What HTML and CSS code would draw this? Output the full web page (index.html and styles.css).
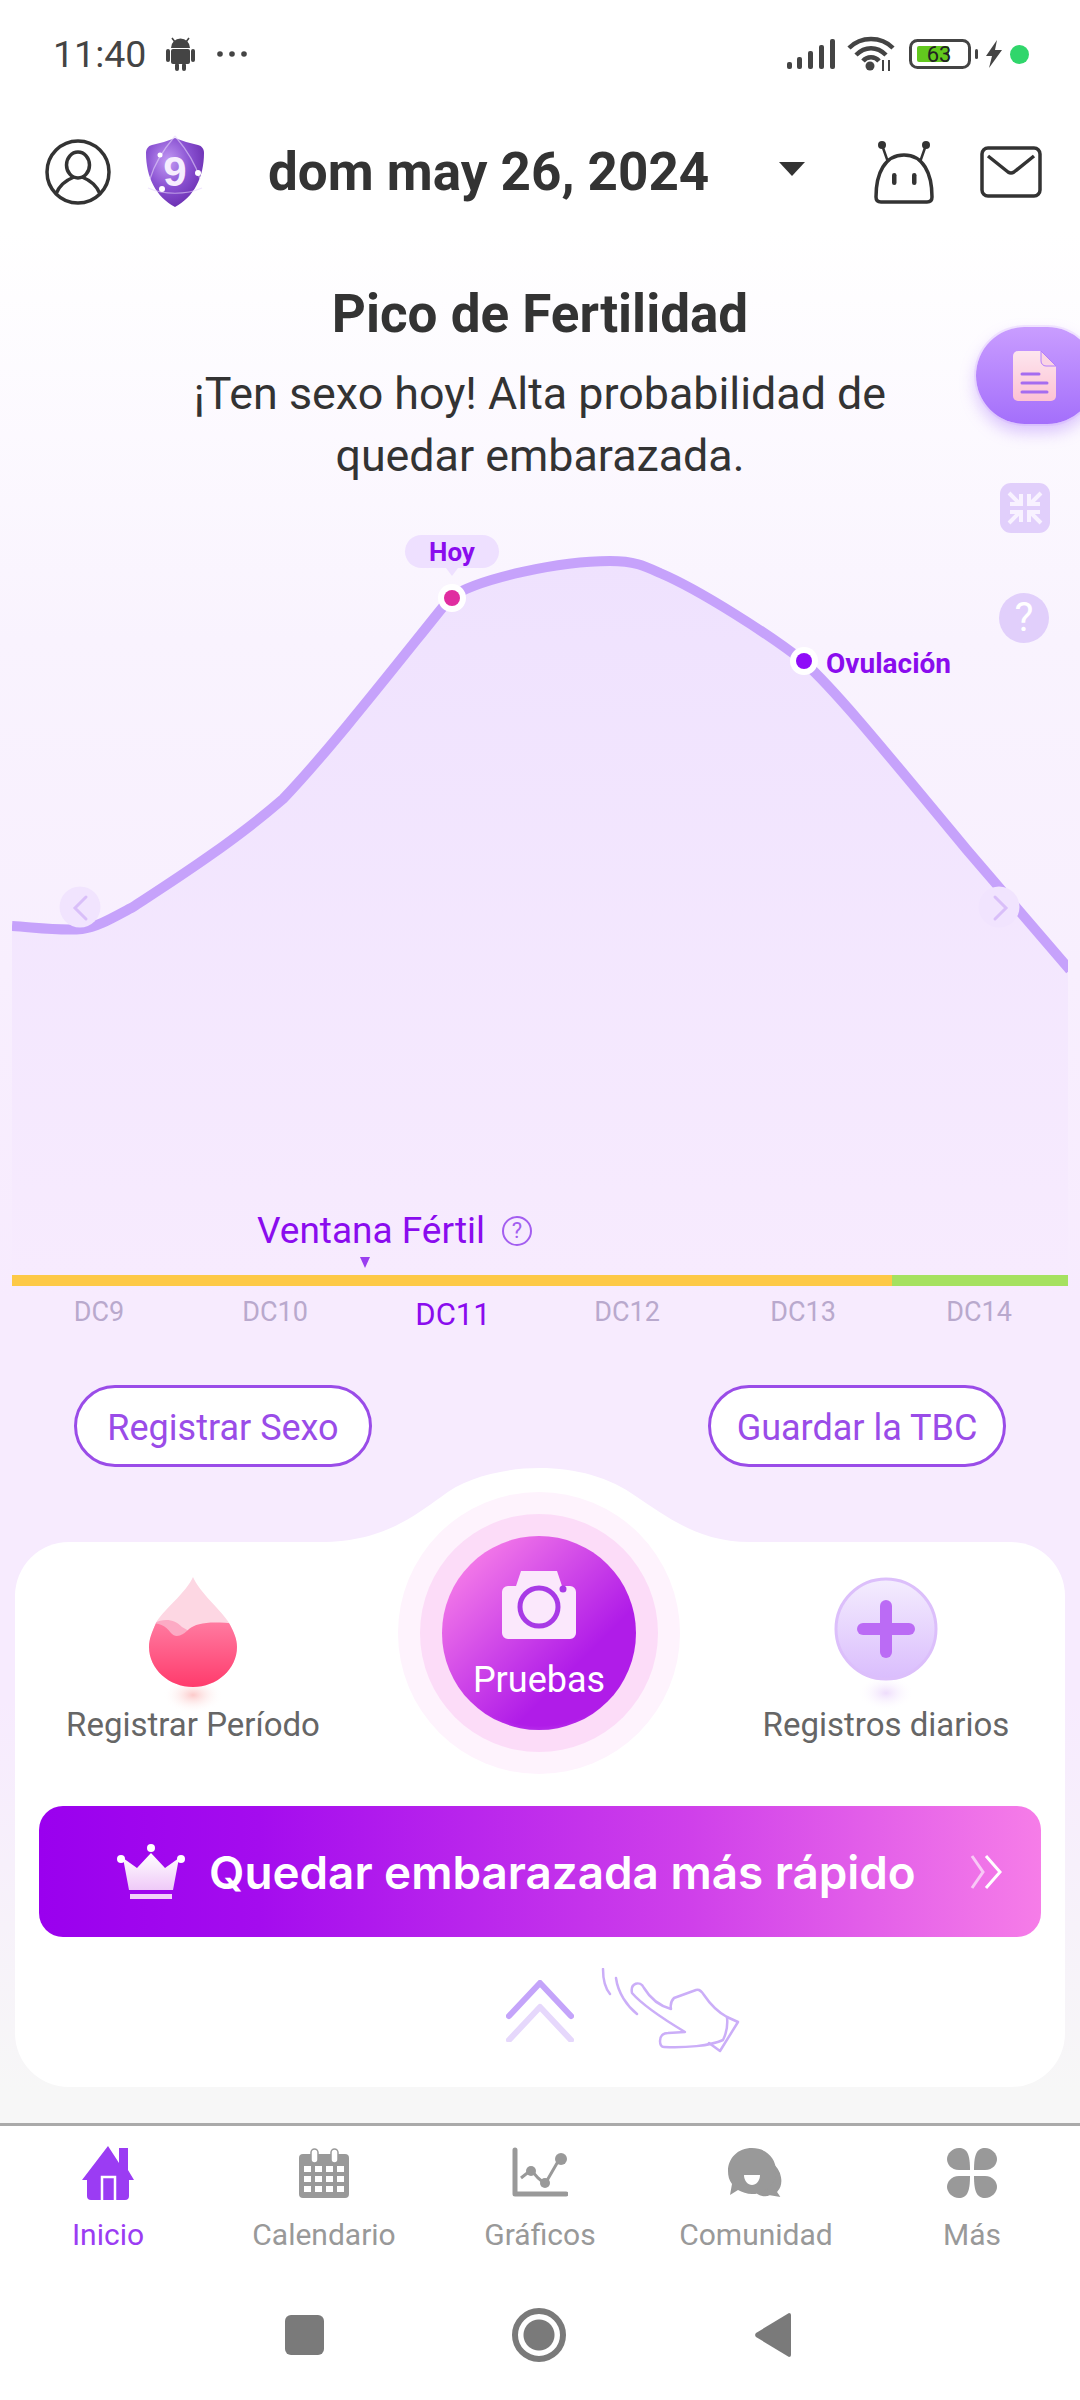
FILE: index.html
```html
<!DOCTYPE html>
<html lang="es">
<head>
    <meta charset="UTF-8">
    <meta name="viewport" content="width=device-width, initial-scale=1.0">
    <title>Pico de Fertilidad</title>
    <link rel="stylesheet" href="styles.css">
</head>
<body>
<div class="page">
    <!-- status bar -->
    <div class="status-bar">
        <span class="status-time">11:40</span>
        <svg class="st-android" width="29" height="34" viewBox="0 0 29 34"><path d="M6 1l3 4M23 1l-3 4" stroke="#444" stroke-width="1.6"/><path d="M5 11a9.500 9.500 0 0 1 19 0z" fill="#444"/><rect x="5" y="12" width="19" height="15" rx="2" fill="#444"/><rect x="0" y="12" width="4" height="13" rx="2" fill="#444"/><rect x="25" y="12" width="4" height="13" rx="2" fill="#444"/><rect x="9" y="26" width="4" height="8" rx="2" fill="#444"/><rect x="16" y="26" width="4" height="8" rx="2" fill="#444"/></svg>
        <svg class="st-dots" width="30" height="6" viewBox="0 0 30 6"><circle cx="3" cy="3" r="2.800" fill="#444"/><circle cx="15" cy="3" r="2.800" fill="#444"/><circle cx="27" cy="3" r="2.800" fill="#444"/></svg>
        <div class="status-right">
            <svg width="48" height="30" viewBox="0 0 48 30"><rect x="0" y="23" width="5" height="7" rx="2" fill="#444"/><rect x="10" y="18" width="5" height="12" rx="2" fill="#444"/><rect x="21" y="12" width="5" height="18" rx="2" fill="#444"/><rect x="32" y="6" width="5" height="24" rx="2" fill="#444"/><rect x="43" y="0" width="5" height="30" rx="2" fill="#444"/></svg>
            <svg class="st-wifi" width="48" height="36" viewBox="0 0 48 36"><g fill="none" stroke="#444" stroke-width="4.500"><path d="M2 12C14 0 34 0 46 12"/><path d="M9 19C18 10 30 10 39 19"/><path d="M16 25C20 20 28 20 32 25"/></g><circle cx="23" cy="30" r="4.500" fill="#444"/><path d="M36 24v11M42 24v11" stroke="#444" stroke-width="2"/></svg>
            <svg class="st-battery" width="70" height="30" viewBox="0 0 70 30"><rect x="1.500" y="1.500" width="59" height="27" rx="7" fill="none" stroke="#444" stroke-width="3"/><rect x="8" y="7" width="32" height="16" rx="2" fill="#62c91e"/><rect x="66" y="10" width="3" height="10" rx="1.500" fill="#444"/><text x="30" y="23" text-anchor="middle" class="battery-text">63</text></svg>
            <svg class="st-bolt" width="18" height="28" viewBox="0 0 18 28"><path d="M12 0L1 16h6L4 28 17 10h-7z" fill="#444"/></svg>
            <span class="st-green"></span>
        </div>
    </div>

    <!-- header -->
    <header class="app-header">
        <svg class="hd-profile" width="66" height="66" viewBox="0 0 66 66"><g fill="none" stroke="#333" stroke-width="3.500"><circle cx="33" cy="33" r="31"/><ellipse cx="33" cy="26" rx="11.500" ry="13"/><path d="M11 55C15 44 24 40 29 38M55 55C51 44 42 40 37 38"/></g></svg>
        <svg class="hd-badge" width="62" height="74" viewBox="0 0 62 74">
            <defs><radialGradient id="shield" cx=".38" cy=".34" r=".75"><stop offset="0" stop-color="#c39bf4"/><stop offset=".5" stop-color="#8a52d2"/><stop offset="1" stop-color="#6528ab"/></radialGradient></defs>
            <path d="M31 3C38 6 46 8 54 10C58 11 60 14 60 18C60 42 50 62 31 72C12 62 2 42 2 18C2 14 4 11 8 10C16 8 24 6 31 3z" fill="url(#shield)"/>
            <path d="M31 1C42 14 52 30 56 44M31 1C20 14 10 30 6 44M4 53C20 60 42 60 58 53" fill="none" stroke="#e4d4fa" stroke-width="1.200" opacity=".6"/>
            <circle cx="16" cy="20" r="2.500" fill="#fff"/><circle cx="54" cy="38" r="3" fill="#fff"/><circle cx="18" cy="54" r="3" fill="#fff"/>
            <text x="31" y="51" text-anchor="middle" class="badge-text">9</text>
        </svg>
        <h1 class="hd-date">dom may 26, 2024</h1>
        <span class="hd-caret"></span>
        <svg class="hd-robot" width="62" height="64" viewBox="0 0 62 64"><g fill="none" stroke="#333" stroke-width="3.500"><path d="M3 57C3 33 12 15 31 15S59 33 59 57Q59 62 54 62H8Q3 62 3 57z" stroke-linejoin="round"/><path d="M15 22L9 5M47 22L53 5" stroke-width="2.500"/></g><circle cx="9" cy="5" r="4" fill="#333"/><circle cx="53" cy="5" r="4" fill="#333"/><rect x="19" y="33" width="4.500" height="12" rx="2.250" fill="#333"/><rect x="39" y="33" width="4.500" height="12" rx="2.250" fill="#333"/></svg>
        <svg class="hd-mail" width="62" height="52" viewBox="0 0 62 52"><g fill="none" stroke="#333" stroke-width="3.500"><rect x="2" y="2" width="58" height="48" rx="6"/><path d="M8 10L28 26Q31 28 34 26L54 10" stroke-linejoin="round"/></g></svg>
    </header>

    <!-- headline -->
    <section class="hero">
        <h2 class="hero-title">Pico de Fertilidad</h2>
        <p class="hero-text">¡Ten sexo hoy! Alta probabilidad de<br>quedar embarazada.</p>
    </section>

    <div class="side-doc">
        <svg width="44" height="52" viewBox="0 0 44 52">
            <defs><linearGradient id="doc" x1="0" y1="0" x2="0" y2="1"><stop offset="0" stop-color="#fde6ee"/><stop offset="1" stop-color="#fdc2d4"/></linearGradient></defs>
            <path d="M5 1H28L43 16V46a5 5 0 0 1-5 5H5a5 5 0 0 1-5-5V6a5 5 0 0 1 5-5z" fill="url(#doc)"/>
            <path d="M28 1L43 16H33a5 5 0 0 1-5-5z" fill="#fbd4e3" stroke="#b27dfc" stroke-width="1"/>
            <path d="M9 24H26M9 33H34M9 42H34" stroke="#a56cf0" stroke-width="3" stroke-linecap="round"/>
        </svg>
    </div>
    <div class="side-shrink">
        <svg width="36" height="34" viewBox="0 0 36 34"><g fill="none" stroke="#f8f2ff" stroke-width="4"><path d="M2 2L12 12M14 3V13H3"/><path d="M34 2L24 12M22 3V13H33"/><path d="M2 32L12 22M14 31V21H3"/><path d="M34 32L24 22M22 31V21H33"/></g></svg>
    </div>
    <div class="side-help">?</div>

    <!-- chart -->
    <section class="chart">
        <svg class="chart-svg" width="1080" height="840" viewBox="0 500 1080 840">
            <defs>
                <linearGradient id="area" x1="0" y1="0" x2="0" y2="1">
                    <stop offset="0" stop-color="#efe2fe"/>
                    <stop offset="1" stop-color="#f7ebfe"/>
                </linearGradient>
                <clipPath id="chartClip"><rect x="12" y="500" width="1056" height="775"/></clipPath>
            </defs>
            <g clip-path="url(#chartClip)">
                <path d="M12 926C40 928 62 931 82 929C98 927 114 917 133 907C165 886 230 845 283 799C330 750 400 660 451 597C480 578 560 561 610 561C635 561 645 566 660 573C700 590 770 635 803 661C835 690 880 745 967 850L1070 970V1275H12z" fill="url(#area)"/>
                <path d="M12 926C40 928 62 931 82 929C98 927 114 917 133 907C165 886 230 845 283 799C330 750 400 660 451 597C480 578 560 561 610 561C635 561 645 566 660 573C700 590 770 635 803 661C835 690 880 745 967 850L1070 970" fill="none" stroke="#c6a2fb" stroke-width="10"/>
            </g>
            <circle cx="80" cy="907" r="20.500" fill="#f1e4fe"/>
            <path d="M86 897L75 908L86 919" fill="none" stroke="#d9bff9" stroke-width="3" stroke-linecap="round"/>
            <circle cx="999" cy="907" r="20.500" fill="#f1e4fe"/>
            <path d="M995 897L1006 908L995 919" fill="none" stroke="#d9bff9" stroke-width="3" stroke-linecap="round"/>
            <circle cx="452" cy="598" r="14" fill="#fff"/>
            <circle cx="452" cy="598" r="8" fill="#e02da0"/>
            <circle cx="804" cy="661" r="14" fill="#fff"/>
            <circle cx="804" cy="661" r="8" fill="#8f0cf8"/>
        </svg>
        <span class="chart-today">Hoy</span>
        <span class="chart-ovulation">Ovulación</span>
        <div class="window-label">
            <span>Ventana Fértil</span>
            <span class="window-help">?</span>
        </div>
        <span class="window-marker"></span>
        <div class="cycle-bar"><span class="bar-yellow"></span><span class="bar-green"></span></div>
        <div class="cycle-days">
            <span>DC9</span><span>DC10</span><span class="day-today">DC11</span><span>DC12</span><span>DC13</span><span>DC14</span>
        </div>
    </section>

    <div class="actions">
        <button class="pill-btn">Registrar Sexo</button>
        <button class="pill-btn">Guardar la TBC</button>
    </div>

    <!-- white card -->
    <section class="card">
        <svg class="card-hump" width="560" height="76" viewBox="0 0 560 76"><path d="M60 75C120 75 150 52 181 30C205 10 245 1 280 1C315 1 350 10 377 30C410 52 440 75 490 75V76H60z" fill="#fff"/></svg>
        <div class="quick-row">
            <div class="quick-item">
                <svg width="88" height="135" viewBox="0 0 88 135">
                    <defs>
                        <linearGradient id="blood" x1="0" y1="0" x2="0" y2="1"><stop offset="0" stop-color="#ff7aa0"/><stop offset="1" stop-color="#ff3b6c"/></linearGradient>
                        <radialGradient id="dropShadow"><stop offset="0" stop-color="#fcc9c9"/><stop offset="1" stop-color="#fff" stop-opacity="0"/></radialGradient>
                        <clipPath id="dropClip"><path d="M44 0C50 15 74 35 80 46C85 55 88 62 88 70C88 92 68 110 44 110S0 92 0 70C0 62 3 55 7 46C12 35 38 15 44 0z"/></clipPath>
                    </defs>
                    <ellipse cx="44" cy="118" rx="30" ry="18" fill="url(#dropShadow)"/>
                    <g clip-path="url(#dropClip)">
                        <rect width="88" height="110" fill="#fdd7e3"/>
                        <path d="M5 46C15 41 26 42 33 50L40 54L26 62L15 52z" fill="#fcaac4"/>
                        <path d="M0 46C10 46 16 48 22 56C27 62 34 58 40 52C48 46 60 44 88 47V110H0z" fill="url(#blood)"/>
                    </g>
                </svg>
                <span class="quick-label">Registrar Período</span>
            </div>
            <div class="test-cell">
                <div class="test-ring-outer">
                    <div class="test-ring-mid">
                        <div class="test-btn">
                            <svg width="76" height="70" viewBox="0 0 76 70"><path d="M20 1H56L61 16H69a6 6 0 0 1 6 6V63a6 6 0 0 1-6 6H7a6 6 0 0 1-6-6V22a6 6 0 0 1 6-6H15z" fill="#fbe8fc"/><circle cx="38" cy="37" r="19" fill="none" stroke="#a83ae6" stroke-width="5"/><circle cx="62" cy="19" r="3.500" fill="#a83ae6"/></svg>
                            <span>Pruebas</span>
                        </div>
                    </div>
                </div>
            </div>
            <div class="quick-item">
                <svg width="104" height="135" viewBox="0 0 104 135">
                    <defs>
                        <linearGradient id="plusBg" x1="0" y1="0" x2="0" y2="1"><stop offset="0" stop-color="#f4edfe"/><stop offset="1" stop-color="#dabdfd"/></linearGradient>
                        <radialGradient id="plusShadow"><stop offset="0" stop-color="#eedcfc"/><stop offset="1" stop-color="#fff" stop-opacity="0"/></radialGradient>
                    </defs>
                    <ellipse cx="52" cy="116" rx="28" ry="18" fill="url(#plusShadow)"/>
                    <circle cx="52" cy="52" r="50" fill="url(#plusBg)" stroke="#dcbffb" stroke-width="3"/>
                    <rect x="46" y="23" width="12" height="58" rx="6" fill="#bb6bf5"/>
                    <rect x="23" y="46" width="58" height="12" rx="6" fill="#bb6bf5"/>
                </svg>
                <span class="quick-label">Registros diarios</span>
            </div>
        </div>

        <div class="banner">
            <svg width="68" height="56" viewBox="0 0 68 56">
                <defs><linearGradient id="crown" x1="0" y1="0" x2="0" y2="1"><stop offset="0" stop-color="#fff"/><stop offset="1" stop-color="#efc9f8"/></linearGradient></defs>
                <path d="M6 14L20 24L34 9L48 24L62 14L56 46H12z" fill="url(#crown)"/>
                <circle cx="34" cy="4" r="4" fill="#fff"/><circle cx="4" cy="15" r="4" fill="#fff"/><circle cx="64" cy="15" r="4" fill="#fff"/>
                <rect x="13" y="50" width="42" height="5" fill="#f2d0f9"/>
            </svg>
            <span class="banner-text">Quedar embarazada más rápido</span>
            <svg class="banner-arrows" width="33" height="34" viewBox="0 0 33 34"><g fill="none" stroke-width="3"><path d="M2 1L13 17L2 33" stroke="#f8c8f6"/><path d="M16 1L30 17L16 33" stroke="#fff"/></g></svg>
        </div>

        <div class="swipe-hint">
            <svg width="68" height="62" viewBox="0 0 68 62" fill="none" stroke-linecap="round" stroke-linejoin="round"><path d="M3 36L34 3L65 36" stroke="#c4a4fa" stroke-width="6"/><path d="M3 60L34 27L65 60" stroke="#e6d8fc" stroke-width="6"/></svg>
            <svg width="140" height="86" viewBox="0 0 140 86" fill="none" stroke="#cbaef8" stroke-width="2.500" stroke-linejoin="round" stroke-linecap="round"><path d="M3 1C3 10 5 20 10 26M16 10C18 25 27 38 37 46"/><path d="M32 25C30 15 40 12 44 20C50 30 60 38 71 41C70 36 71 33 74 30L96 22C100 21 102 24 104 27C110 36 118 44 127 49C128 58 126 66 123 72C110 78 85 80 64 79C61 79 60 76 60 73C60 68 63 65 68 65L85 64C70 55 45 40 32 25Z"/><path d="M127 49L138 54L120 83L109 75"/></svg>
        </div>
    </section>

    <!-- tab bar -->
    <nav class="tab-bar">
        <a class="tab tab-active">
            <svg width="52" height="54" viewBox="0 0 52 54"><path d="M26 0L37 17V2H46V24L52 34H47V50a4 4 0 0 1-4 4H9a4 4 0 0 1-4-4V34H0z" fill="#9b3cf3"/><path d="M20 54V31H33V54" fill="none" stroke="#fff" stroke-width="2.500"/></svg>
            <span>Inicio</span>
        </a>
        <a class="tab">
            <svg width="50" height="50" viewBox="0 0 50 50"><rect y="6" width="50" height="44" rx="4" fill="#999"/><g fill="#fff"><rect x="5" y="18" width="7" height="6"/><rect x="16" y="18" width="7" height="6"/><rect x="27" y="18" width="7" height="6"/><rect x="38" y="18" width="7" height="6"/><rect x="5" y="28" width="7" height="6"/><rect x="16" y="28" width="7" height="6"/><rect x="27" y="28" width="7" height="6"/><rect x="38" y="28" width="7" height="6"/><rect x="5" y="38" width="7" height="6"/><rect x="16" y="38" width="7" height="6"/><rect x="27" y="38" width="7" height="6"/><rect x="38" y="38" width="7" height="6"/></g><rect x="12" y="1" width="7" height="14" rx="3.500" fill="#fff" stroke="#999" stroke-width="1.500"/><rect x="32" y="1" width="7" height="14" rx="3.500" fill="#fff" stroke="#999" stroke-width="1.500"/></svg>
            <span>Calendario</span>
        </a>
        <a class="tab">
            <svg width="56" height="50" viewBox="0 0 56 50"><path d="M3 2V46H54" fill="none" stroke="#999" stroke-width="5" stroke-linecap="round" stroke-linejoin="round"/><path d="M9 30L19 22L26 30L33 36L48 10" fill="none" stroke="#999" stroke-width="3"/><circle cx="19" cy="23" r="5" fill="#999"/><circle cx="33" cy="35" r="5" fill="#999"/><circle cx="49" cy="11" r="6" fill="#999"/></svg>
            <span>Gráficos</span>
        </a>
        <a class="tab">
            <svg width="56" height="50" viewBox="0 0 56 50"><path d="M44 14C55 22 57 36 50 44L54 50L42 48C38 50 32 49 28 46z" fill="#999" stroke="#fff" stroke-width="1.500"/><path d="M24 0C38 0 48 10 48 23S38 46 24 46C19 46 14 44 10 42L2 47L4 36C1 32 0 28 0 23C0 10 10 0 24 0z" fill="#999"/><path d="M16 27H32C32 33 28 37 24 37S16 33 16 27z" fill="#fff"/></svg>
            <span>Comunidad</span>
        </a>
        <a class="tab">
            <svg width="50" height="50" viewBox="0 0 50 50" fill="#999"><path d="M12 0C20 0 23 6 23 22H12C4 22 0 16 0 11S5 0 12 0z"/><path d="M38 0C30 0 27 6 27 22H38C46 22 50 16 50 11S45 0 38 0z"/><path d="M12 50C20 50 23 44 23 28H12C4 28 0 34 0 39S5 50 12 50z"/><path d="M38 50C30 50 27 44 27 28H38C46 28 50 34 50 39S45 50 38 50z"/></svg>
            <span>Más</span>
        </a>
    </nav>

    <!-- system nav -->
    <div class="system-nav">
        <span class="sys-square"></span>
        <span class="sys-circle"></span>
        <svg width="36" height="46" viewBox="0 0 36 46"><path d="M34 1a2 2 0 0 1 2 2V43a2 2 0 0 1-2 2L1 25a3 3 0 0 1 0-4z" fill="#7a7a7a"/></svg>
    </div>
</div>
</body>
</html>
```

FILE: styles.css
```css
:root {
    --purple: #8a0cee;
    --purple-soft: #9a4ce8;
    --ink: #333;
}

* {
    box-sizing: border-box;
}

body {
    margin: 0;
    font-family: Roboto, sans-serif;
    color: var(--ink);
}

svg {
    display: block;
    flex-shrink: 0;
}

.page {
    position: relative;
    width: 1080px;
    height: 2400px;
    overflow: hidden;
    display: flex;
    flex-direction: column;
    background: linear-gradient(180deg, #fff 0, #fff 230px, #f9f3fe 640px, #f7ebfe 1300px, #f7ebfe 1700px, #f7f7f7 2090px);
}

/* status bar */
.status-bar {
    height: 108px;
    flex-shrink: 0;
    display: flex;
    align-items: center;
    padding: 0 51px 0 53px;
    color: #444;
}

.status-time {
    font-size: 37.500px;
}

.st-android {
    margin-left: 20px;
}

.st-dots {
    margin-left: 22px;
}

.status-right {
    margin-left: auto;
    display: flex;
    align-items: center;
}

.st-wifi {
    margin-left: 12px;
}

.st-battery {
    margin-left: 14px;
}

.battery-text {
    font-family: Roboto, sans-serif;
    font-size: 22px;
    fill: #222;
}

.st-bolt {
    margin-left: 6px;
}

.st-green {
    width: 19px;
    height: 19px;
    margin-left: 7px;
    border-radius: 50%;
    background: #30d66b;
}

/* header */
.app-header {
    height: 128px;
    flex-shrink: 0;
    display: flex;
    align-items: center;
    padding-left: 45px;
}

.hd-badge {
    margin-left: 33px;
}

.badge-text {
    font-family: "Liberation Sans", sans-serif;
    font-size: 42px;
    font-weight: 700;
    fill: #f6eefe;
}

.hd-date {
    margin: 0 0 0 62px;
    font-size: 53px;
    font-weight: 700;
    white-space: nowrap;
}

.hd-caret {
    margin-left: 70px;
    width: 0;
    height: 0;
    border-left: 13px solid transparent;
    border-right: 13px solid transparent;
    border-top: 14px solid var(--ink);
    transform: translateY(-3px);
}

.hd-robot {
    margin-left: 68px;
}

.hd-mail {
    margin-left: 45px;
}

/* headline */
.hero {
    height: 264px;
    flex-shrink: 0;
    padding-top: 48px;
    text-align: center;
}

.hero-title {
    margin: 0;
    font-size: 53px;
    line-height: 60px;
    font-weight: 700;
}

.hero-text {
    margin: 19px 0 0;
    font-size: 44.800px;
    line-height: 62px;
}

/* side buttons */
.side-doc {
    position: absolute;
    left: 976px;
    top: 327px;
    width: 120px;
    height: 97px;
    padding: 23px 0 0 37px;
    border-radius: 49px;
    background: linear-gradient(180deg, #c99dff, #a46ffb);
    box-shadow: 0 8px 16px rgba(164, 111, 251, .4), 0 0 0 2px #f4e9ff;
}

.side-shrink {
    position: absolute;
    left: 1000px;
    top: 483px;
    width: 50px;
    height: 50px;
    display: flex;
    align-items: center;
    justify-content: center;
    border-radius: 11px;
    background: #e1cffb;
}

.side-help {
    position: absolute;
    left: 999px;
    top: 593px;
    width: 50px;
    height: 50px;
    border-radius: 50%;
    background: #e1cffb;
    color: #fff;
    font-size: 40px;
    line-height: 50px;
    text-align: center;
}

/* chart */
.chart {
    position: relative;
    height: 840px;
    flex-shrink: 0;
}

.chart-svg {
    position: absolute;
    left: 0;
    top: 0;
}

.chart-today {
    position: absolute;
    left: 405px;
    top: 35px;
    width: 94px;
    height: 33px;
    border-radius: 17px;
    background: #eee0ff;
    color: var(--purple);
    font-size: 26px;
    font-weight: 700;
    line-height: 35px;
    text-align: center;
}

.chart-today::after {
    content: '';
    position: absolute;
    left: 41px;
    top: 33px;
    border-left: 6px solid transparent;
    border-right: 6px solid transparent;
    border-top: 8px solid #eee0ff;
}

.chart-ovulation {
    position: absolute;
    left: 826px;
    top: 149px;
    color: var(--purple);
    font-size: 28px;
    font-weight: 700;
    line-height: 30px;
}

.window-label {
    position: absolute;
    left: 257px;
    top: 709px;
    display: flex;
    align-items: center;
    gap: 17px;
    color: var(--purple);
    font-size: 37px;
    line-height: 44px;
}

.window-help {
    width: 30px;
    height: 30px;
    border: 2px solid #a35ef0;
    border-radius: 50%;
    color: #a35ef0;
    font-size: 22px;
    line-height: 26px;
    text-align: center;
}

.window-marker {
    position: absolute;
    left: 360px;
    top: 757px;
    border-left: 5.500px solid transparent;
    border-right: 5.500px solid transparent;
    border-top: 11px solid #9a3ef0;
}

.cycle-bar {
    position: absolute;
    left: 12px;
    top: 775px;
    width: 1056px;
    height: 11px;
    display: flex;
}

.bar-yellow {
    width: 880px;
    background: #fdc947;
}

.bar-green {
    flex: 1;
    background: #a5e160;
}

.cycle-days {
    position: absolute;
    left: 11px;
    top: 795px;
    width: 1056px;
    display: grid;
    grid-template-columns: repeat(6, 176px);
    color: #b9a9cd;
    font-size: 27px;
    line-height: 34px;
    text-align: center;
}

.cycle-days .day-today {
    color: var(--purple);
    font-size: 31px;
    transform: translate(2px, 3px);
}

/* buttons under the chart */
.actions {
    flex-shrink: 0;
    margin-top: 45px;
    padding: 0 74px;
    display: flex;
    justify-content: space-between;
}

.pill-btn {
    width: 298px;
    height: 82px;
    padding: 3px 0 0;
    border: 3px solid var(--purple-soft);
    border-radius: 41px;
    background: #fff;
    color: var(--purple-soft);
    font-family: Roboto, sans-serif;
    font-size: 36px;
}

/* white card */
.card {
    position: relative;
    flex-shrink: 0;
    height: 545px;
    margin: 75px 15px 0;
    padding-top: 35px;
    border-radius: 54px;
    background: #fff;
}

.card-hump {
    position: absolute;
    left: 245px;
    top: -75px;
}

.quick-row {
    position: relative;
    height: 197px;
    display: grid;
    grid-template-columns: 356px 1fr 358px;
}

.quick-item {
    display: flex;
    flex-direction: column;
    align-items: center;
}

.quick-label {
    margin-top: -5px;
    color: #666;
    font-size: 33px;
    line-height: 36px;
    white-space: nowrap;
}

.test-cell {
    display: flex;
    justify-content: center;
}

.test-ring-outer {
    width: 282px;
    height: 282px;
    margin-top: -85px;
    padding: 22px;
    flex-shrink: 0;
    border-radius: 50%;
    background: #fef3fd;
}

.test-ring-mid {
    height: 100%;
    padding: 22px;
    border-radius: 50%;
    background: #fcdcf8;
}

.test-btn {
    height: 100%;
    padding-top: 34px;
    display: flex;
    flex-direction: column;
    align-items: center;
    border-radius: 50%;
    background: radial-gradient(circle at 50% 40%, transparent 74%, rgba(232, 190, 250, .8) 100%), linear-gradient(135deg, #f77ee8 10%, #b01ce8 68%);
    color: #fff;
    font-size: 36px;
    line-height: 40px;
}

.test-btn span {
    margin-top: 20px;
}

.banner {
    height: 131px;
    margin: 32px 24px 0;
    padding: 0 38px 0 78px;
    display: flex;
    align-items: center;
    border-radius: 24px;
    background: linear-gradient(90deg, #9a00ee 0, #a40cee 22%, #cf40ea 65%, #f67de8 100%);
}

.banner-text {
    margin-left: 24px;
    color: #fff;
    font-family: Inter, sans-serif;
    font-size: 45.800px;
    font-weight: 600;
    line-height: 56px;
    padding-top: 3px;
    white-space: nowrap;
}

.banner-arrows {
    margin-left: auto;
}

.swipe-hint {
    margin-top: 31px;
    padding-left: 491px;
    display: flex;
    align-items: center;
    gap: 26px;
}

/* tab bar */
.tab-bar {
    position: absolute;
    left: 0;
    right: 0;
    top: 2123px;
    height: 150px;
    padding-top: 20px;
    display: grid;
    grid-template-columns: repeat(5, 216px);
    border-top: 3px solid #aaa;
    background: #fff;
}

.tab {
    display: flex;
    flex-direction: column;
    align-items: center;
    color: #999;
    font-size: 30px;
    line-height: 34px;
}

.tab svg {
    height: 54px;
}

.tab span {
    margin-top: 18px;
}

.tab-active {
    color: #9b3cf3;
}

/* android nav */
.system-nav {
    position: absolute;
    left: 0;
    right: 0;
    top: 2273px;
    height: 127px;
    display: flex;
    align-items: center;
    padding: 0 0 3px 285px;
    background: #fff;
}

.sys-square {
    width: 39px;
    height: 40px;
    border-radius: 6px;
    background: #7a7a7a;
}

.sys-circle {
    width: 54px;
    height: 54px;
    margin-left: 188px;
    border: 6px solid #7a7a7a;
    border-radius: 50%;
    background: radial-gradient(circle, #7a7a7a 0, #7a7a7a 15px, #fff 16px);
}

.system-nav svg {
    margin-left: 189px;
}
```
